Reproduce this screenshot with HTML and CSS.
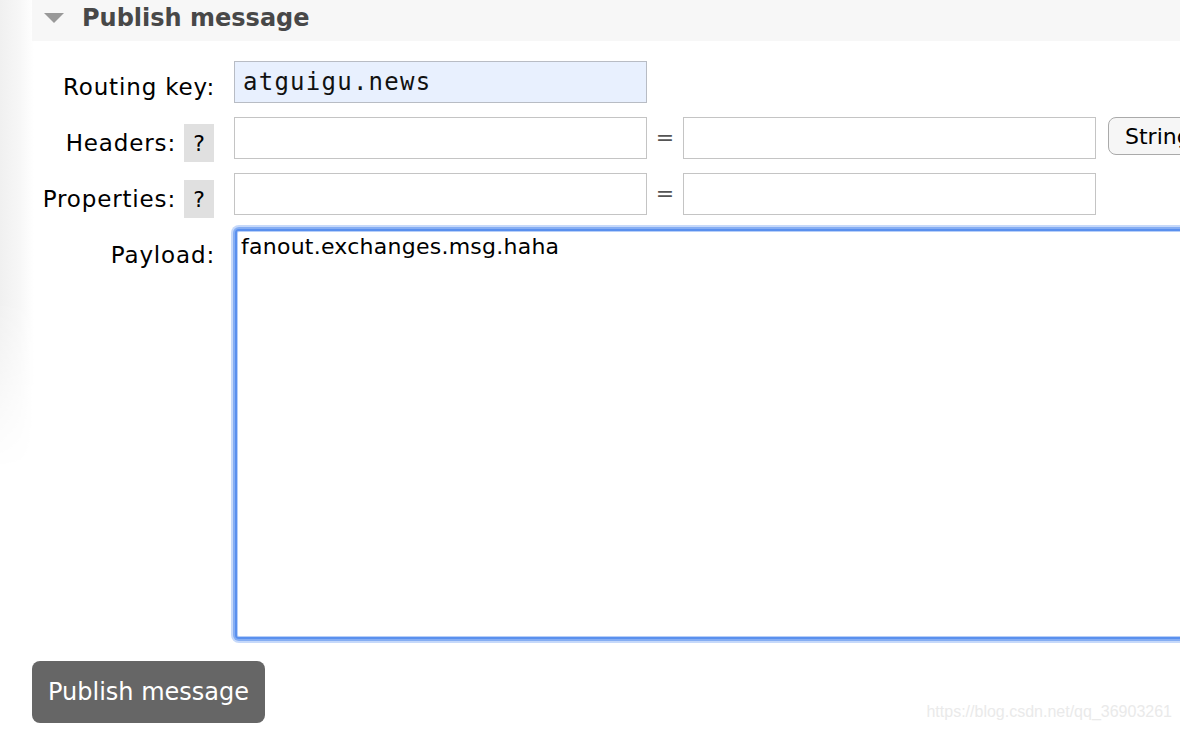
FILE: index.html
```html
<!DOCTYPE html>
<html>
<head>
<meta charset="utf-8">
<link rel="stylesheet" href="styles.css">
</head>
<body>
<div class="page">
  <div class="section-head">
    <span class="tri"></span>
    <h2 class="title">Publish message</h2>
  </div>
  <div class="form">
    <div class="label"><span class="lt">Routing key:</span></div>
    <div class="field"><input class="inp mono autofill" type="text" value="atguigu.news"></div>

    <div class="label"><span class="lt">Headers:</span><span class="help">?</span></div>
    <div class="field">
      <input class="inp" type="text">
      <span class="eq">=</span>
      <input class="inp" type="text">
      <button class="type-btn">String</button>
    </div>

    <div class="label"><span class="lt">Properties:</span><span class="help">?</span></div>
    <div class="field">
      <input class="inp" type="text">
      <span class="eq">=</span>
      <input class="inp" type="text">
    </div>

    <div class="label"><span class="lt">Payload:</span></div>
    <div class="field"><textarea class="payload">fanout.exchanges.msg.haha</textarea></div>
  </div>
  <div class="actions">
    <button class="publish">Publish message</button>
  </div>
  <div class="watermark">https://blog.csdn.net/qq_36903261</div>
</div>
</body>
</html>
```
FILE: styles.css
```css
html, body {
  margin: 0;
  padding: 0;
  width: 1180px;
  height: 730px;
  overflow: hidden;
  background: #fff;
}
body {
  font-family: "DejaVu Sans", Verdana, sans-serif;
  color: #000;
  position: relative;
}
body::before {
  content: "";
  position: absolute;
  left: 0;
  top: 0;
  width: 34px;
  height: 480px;
  background: linear-gradient(to right, #f0f0f0, #f7f7f7 20px, #ffffff);
  -webkit-mask-image: linear-gradient(to bottom, #000 0, #000 300px, transparent 470px);
  mask-image: linear-gradient(to bottom, #000 0, #000 300px, transparent 470px);
}
.page {
  position: relative;
  width: 1180px;
  height: 730px;
}
.section-head {
  margin-left: 32px;
  height: 41px;
  background: #f7f7f7;
  display: flex;
  align-items: center;
  padding-left: 12px;
  gap: 18px;
}
.tri {
  width: 0;
  height: 0;
  border-left: 10px solid transparent;
  border-right: 10px solid transparent;
  border-top: 10px solid #999;
  margin-top: -5px;
}
.title {
  margin: 0;
  font-size: 24px;
  font-weight: bold;
  color: #484848;
  margin-top: -6px;
}
.form {
  display: grid;
  grid-template-columns: 214px 1fr;
  column-gap: 20px;
  row-gap: 14px;
  margin-top: 20px;
}
.label {
  box-sizing: border-box;
  display: flex;
  justify-content: flex-end;
  align-items: flex-start;
  gap: 9px;
  height: 42px;
  padding-top: 7px;
  font-size: 23px;
}
.lt {
  line-height: 38px;
  letter-spacing: 0.85px;
  margin-right: -1px;
}
.field {
  display: flex;
  align-items: flex-start;
}
.inp {
  box-sizing: border-box;
  width: 413px;
  height: 42px;
  border: 1px solid #c4c4c4;
  background: #fff;
  margin: 0;
  padding: 0 8px;
  font-family: "DejaVu Sans", sans-serif;
  font-size: 21px;
  outline: none;
}
.mono {
  font-family: "DejaVu Sans Mono", monospace;
  font-size: 24px;
  letter-spacing: 1.25px;
  color: #111;
}
.autofill {
  background: #e8f0fe;
  border-color: #b8bcc4;
}
.eq {
  width: 36px;
  text-align: center;
  line-height: 42px;
  font-size: 22px;
  color: #555;
}
.help {
  display: inline-flex;
  align-items: center;
  justify-content: center;
  width: 30px;
  height: 38px;
  flex-shrink: 0;
  background: #e0e0e0;
  font-size: 22px;
}
.type-btn {
  margin-left: 12px;
  height: 38px;
  padding: 0 16px;
  border: 1px solid #aaa;
  border-radius: 8px;
  background: #f6f6f6;
  font-family: "DejaVu Sans", sans-serif;
  font-size: 22px;
  color: #000;
  flex-shrink: 0;
}
.payload {
  box-sizing: border-box;
  width: 960px;
  height: 410px;
  margin: 0 0 0 1px;
  padding: 3px 4px;
  border: 2px solid #5a90ee;
  border-radius: 4px;
  box-shadow: inset 0 0 0 1px #b8cff8, 0 0 0 2px #86aef3, 0 0 0 4px #c6d9fa;
  font-family: "DejaVu Sans", sans-serif;
  font-size: 22px;
  letter-spacing: 0.25px;
  resize: none;
  outline: none;
  color: #000;
}
.actions {
  margin-top: 22px;
  padding-left: 32px;
}
.publish {
  height: 62px;
  padding: 0 16px;
  border: none;
  border-radius: 8px;
  background: #666;
  color: #fff;
  font-family: "DejaVu Sans", sans-serif;
  font-size: 24px;
}
.watermark {
  position: absolute;
  right: 8px;
  top: 703px;
  font-family: "Liberation Sans", Arial, sans-serif;
  font-size: 16px;
  color: #eaeaea;
}
```
